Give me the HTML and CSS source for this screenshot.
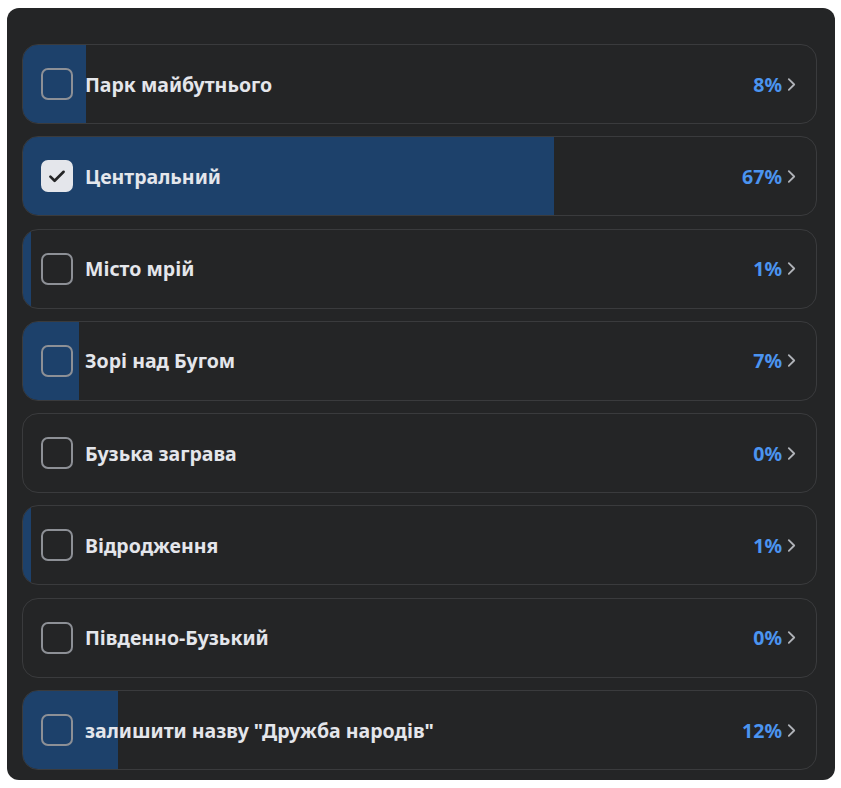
FILE: index.html
```html
<!DOCTYPE html>
<html lang="uk">
<head>
  <meta charset="UTF-8" />
  <title>Опитування</title>
  <link rel="stylesheet" href="styles.css">
</head>
<body>
  <div class="poll">
    <div class="option">
      <div class="fill" style="width: 8%"></div>
      <span class="box"></span>
      <span class="label">Парк майбутнього</span>
      <span class="pct">8%</span>
      <svg class="chev" viewBox="0 0 10 16"><path d="M2 2l6 6-6 6" /></svg>
    </div>
    <div class="option">
      <div class="fill" style="width: 67%"></div>
      <span class="box checked">
        <svg viewBox="0 0 20 20"><path d="M4.5 10.5l3.5 3.5L15.5 6.5" /></svg>
      </span>
      <span class="label">Центральний</span>
      <span class="pct">67%</span>
      <svg class="chev" viewBox="0 0 10 16"><path d="M2 2l6 6-6 6" /></svg>
    </div>
    <div class="option">
      <div class="fill" style="width: 1%"></div>
      <span class="box"></span>
      <span class="label">Місто мрій</span>
      <span class="pct">1%</span>
      <svg class="chev" viewBox="0 0 10 16"><path d="M2 2l6 6-6 6" /></svg>
    </div>
    <div class="option">
      <div class="fill" style="width: 7%"></div>
      <span class="box"></span>
      <span class="label">Зорі над Бугом</span>
      <span class="pct">7%</span>
      <svg class="chev" viewBox="0 0 10 16"><path d="M2 2l6 6-6 6" /></svg>
    </div>
    <div class="option">
      <span class="box"></span>
      <span class="label">Бузька заграва</span>
      <span class="pct">0%</span>
      <svg class="chev" viewBox="0 0 10 16"><path d="M2 2l6 6-6 6" /></svg>
    </div>
    <div class="option">
      <div class="fill" style="width: 1%"></div>
      <span class="box"></span>
      <span class="label">Відродження</span>
      <span class="pct">1%</span>
      <svg class="chev" viewBox="0 0 10 16"><path d="M2 2l6 6-6 6" /></svg>
    </div>
    <div class="option">
      <span class="box"></span>
      <span class="label">Південно-Бузький</span>
      <span class="pct">0%</span>
      <svg class="chev" viewBox="0 0 10 16"><path d="M2 2l6 6-6 6" /></svg>
    </div>
    <div class="option">
      <div class="fill" style="width: 12%"></div>
      <span class="box"></span>
      <span class="label">залишити назву "Дружба народів"</span>
      <span class="pct">12%</span>
      <svg class="chev" viewBox="0 0 10 16"><path d="M2 2l6 6-6 6" /></svg>
    </div>
  </div>
</body>
</html>
```

FILE: styles.css
```css
body {
  margin: 0;
  background: #fff;
  font-family: "Noto Sans", "Open Sans", sans-serif;
}
.poll {
  margin: 8px 0 0 7px;
  width: 828px;
  height: 772px;
  box-sizing: border-box;
  padding: 36px 18px 0 15px;
  background: #242526;
  border-radius: 12px;
  display: flex;
  flex-direction: column;
  gap: 12.3px;
}
.option {
  position: relative;
  height: 80px;
  box-sizing: border-box;
  border: 1px solid #3a3b3d;
  border-radius: 16px;
  overflow: hidden;
  display: flex;
  align-items: center;
  padding: 0 20px 0 18px;
}
.fill {
  position: absolute;
  left: 0;
  top: 0;
  bottom: 0;
  background: #1d416b;
}
.box {
  position: relative;
  width: 32px;
  height: 32px;
  box-sizing: border-box;
  border: 2px solid #8d9096;
  border-radius: 7px;
  flex: none;
  display: flex;
  align-items: center;
  justify-content: center;
}
.box.checked {
  background: #e4e6eb;
  border-color: #e4e6eb;
}
.box svg {
  width: 24px;
  height: 24px;
  fill: none;
  stroke: #242526;
  stroke-width: 2.2;
  stroke-linecap: round;
  stroke-linejoin: round;
}
.label {
  position: relative;
  margin-left: 12px;
  flex: 1;
  font-size: 19.5px;
  font-weight: 700;
  color: #e4e6eb;
}
.pct {
  position: relative;
  font-size: 19.5px;
  font-weight: 700;
  color: #4b94f0;
}
.chev {
  position: relative;
  width: 9px;
  height: 15px;
  margin-left: 5px;
  fill: none;
  stroke: #b0b3b8;
  stroke-width: 2;
  stroke-linecap: round;
  stroke-linejoin: round;
}
```
